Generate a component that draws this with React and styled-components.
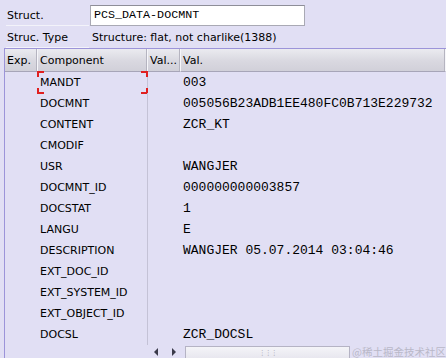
import React from "react";
import styled, { createGlobalStyle } from "styled-components";

const Global = createGlobalStyle`
  html, body { margin: 0; padding: 0; background: #e1dff4; }
  body { width: 446px; height: 358px; overflow: hidden; font-family: "DejaVu Sans", Tahoma, sans-serif; font-size: 11px; color: #000; }
`;

const Page = styled.div`
  width: 446px;
  height: 358px;
  background: #e1dff4;
  display: flex;
  flex-direction: column;
  overflow: hidden;
`;

const FieldRow = styled.div`
  display: flex;
  align-items: flex-start;
  height: ${(p) => p.$h}px;
  padding-left: 6px;
  margin-top: ${(p) => p.$top || 0}px;
`;

const Label = styled.div`
  width: 83px;
  height: 100%;
  line-height: ${(p) => p.$lh}px;
  padding-left: 1px;
  border-bottom: 1px solid #f3f3fa;
  box-sizing: border-box;
  flex: none;
`;

const Input = styled.div`
  margin-left: 1px;
  width: 215px;
  height: 21px;
  box-sizing: border-box;
  background: #fff;
  border: 1px solid #a9a9b4;
  border-top-color: #8e8e98;
  font-family: "Liberation Mono", monospace;
  font-size: 11.7px;
  line-height: 19px;
  padding-left: 3px;
`;

const Info = styled.div`
  margin-left: 3px;
  line-height: 24px;
`;

const Table = styled.div`
  margin-left: 4px;
  flex: 1;
  border-top: 1px solid #9c94d9;
  border-left: 1px solid #9c94d9;
  display: flex;
  flex-direction: column;
`;

const Grid = styled.div`
  display: grid;
  grid-template-columns: 33px 110px 33px 1fr;
`;

const Head = styled.div`
  height: 23px;
  line-height: 23px;
  padding-left: 2px;
  box-sizing: border-box;
  background: linear-gradient(#ebebf0, #d9d8e0 55%, #d1d0d9);
  border-bottom: 1px solid #a7a5b8;
  border-right: 1px solid #f6f6fa;
  box-shadow: inset -1px 0 0 #b5b4c0;
  white-space: nowrap;
  overflow: hidden;
`;

const Cell = styled.div`
  height: 21px;
  line-height: 21px;
  padding-left: 2px;
  white-space: nowrap;
  position: relative;
  border-right: ${(p) => (p.$sep ? "1px solid #c4c2d6" : "none")};
`;

const Mono = styled(Cell)`
  font-family: "Liberation Mono", monospace;
  font-size: 13px;
  overflow: hidden;
`;

const Corner = styled.span`
  position: absolute;
  width: 5px;
  height: 4px;
  border-color: #e02020;
  border-style: solid;
  border-width: 0;
  ${(p) => p.$t && "top: -1px; border-top-width: 2px;"}
  ${(p) => p.$b && "bottom: -1px; border-bottom-width: 2px;"}
  ${(p) => p.$l && "left: -1px; border-left-width: 2px;"}
  ${(p) => p.$r && "right: -1px; border-right-width: 2px;"}
`;

const Bottom = styled.div`
  display: flex;
  align-items: center;
  height: 13px;
  margin-top: auto;
`;

const Spacer = styled.div`
  width: 145px;
  align-self: stretch;
`;

const Arrow = styled.div`
  width: 17px;
  height: 13px;
  display: flex;
  align-items: center;
  justify-content: center;
`;

const Track = styled.div`
  margin-left: 4px;
  width: 167px;
  height: 12px;
  align-self: flex-end;
  box-sizing: border-box;
  border: 1px solid #b5b3c4;
  border-bottom: none;
  background: linear-gradient(#f4f4f8, #e8e7ef);
  display: flex;
  justify-content: center;
  align-items: center;
  color: #9a99aa;
  font-size: 7px;
  letter-spacing: -1px;
`;

const Watermark = styled.div`
  margin-left: 2px;
  color: #b9b8c8;
  font-family: "Noto Sans CJK SC", sans-serif;
  font-size: 10.5px;
  white-space: nowrap;
`;

const rows = [
  ["MANDT", "003"],
  ["DOCMNT", "005056B23ADB1EE480FC0B713E229732"],
  ["CONTENT", "ZCR_KT"],
  ["CMODIF", ""],
  ["USR", "WANGJER"],
  ["DOCMNT_ID", "000000000003857"],
  ["DOCSTAT", "1"],
  ["LANGU", "E"],
  ["DESCRIPTION", "WANGJER 05.07.2014 03:04:46"],
  ["EXT_DOC_ID", ""],
  ["EXT_SYSTEM_ID", ""],
  ["EXT_OBJECT_ID", ""],
  ["DOCSL", "ZCR_DOCSL"],
];

export default function App() {
  return (
    <Page>
      <Global />
      <FieldRow $top={5} $h={21}>
        <Label $lh={21}>Struct.</Label>
        <Input>PCS_DATA-DOCMNT</Input>
      </FieldRow>
      <FieldRow $h={22}>
        <Label $lh={24}>Struc. Type</Label>
        <Info>Structure: flat, not charlike(1388)</Info>
      </FieldRow>
      <Table>
        <Grid>
          <Head>Exp.</Head>
          <Head>Component</Head>
          <Head>Val...</Head>
          <Head>Val.</Head>
          {rows.map(([c, v], i) => (
            <React.Fragment key={c}>
              <Cell />
              <Cell $sep>
                {c}
                {i === 0 && (
                  <>
                    <Corner $t $l />
                    <Corner $t $r />
                    <Corner $b $l />
                    <Corner $b $r />
                  </>
                )}
              </Cell>
              <Cell />
              <Mono>{v}</Mono>
            </React.Fragment>
          ))}
        </Grid>
        <Bottom>
          <Spacer />
          <Arrow>
            <svg width="5" height="8" viewBox="0 0 5 8"><path d="M4 0 L0 4 L4 8 Z" fill="#3a3a4a" /></svg>
          </Arrow>
          <Arrow>
            <svg width="5" height="8" viewBox="0 0 5 8"><path d="M1 0 L5 4 L1 8 Z" fill="#3a3a4a" /></svg>
          </Arrow>
          <Track>⋮⋮⋮</Track>
          <Watermark>@稀土掘金技术社区</Watermark>
        </Bottom>
      </Table>
    </Page>
  );
}
